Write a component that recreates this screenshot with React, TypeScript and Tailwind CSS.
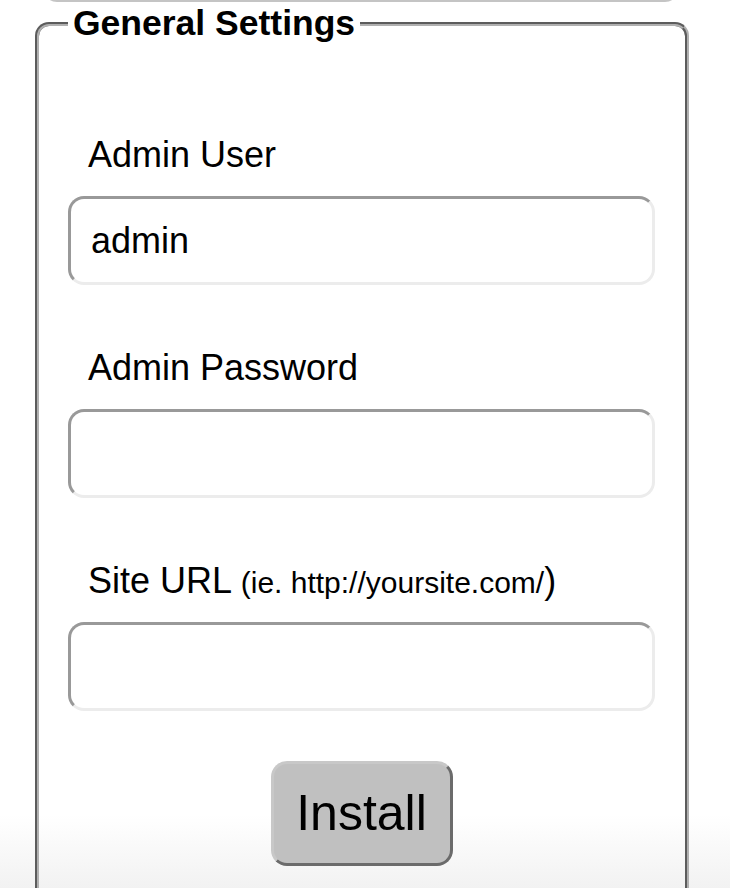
import React from 'react'

const font = { fontFamily: '"Liberation Sans", Arial, Helvetica, sans-serif' }

function Field({ label, value, hint }: { label: string; value?: string; hint?: string }) {
  return (
    <div>
      <label className="block h-[41px] pl-[20px] text-[36px] leading-[41px] text-black">
        {label}
        {hint && (
          <>
            {' '}
            <small className="text-[30px] leading-none">{hint}</small>)
          </>
        )}
      </label>
      <input
        type="text"
        defaultValue={value}
        className="mt-[21px] block h-[89px] w-full rounded-[16px] border-[3px] border-t-[#999] border-l-[#999] border-r-[#ececec] border-b-[#ececec] bg-white px-[20px] text-[36px] text-black outline-none"
      />
    </div>
  )
}

export default function App() {
  return (
    <div
      style={font}
      className="h-[888px] w-[730px] overflow-hidden bg-[linear-gradient(to_bottom,#fff_0,#fff_815px,#f2f2f2_888px)]"
    >
      {/* bottom of the previous panel */}
      <div className="ml-[43px] mt-[-20px] h-[22px] w-[636px] rounded-b-[14px] border-2 border-t-0 border-[#c4c4c4]" />

      <fieldset className="ml-[35px] mt-[1px] min-h-[1000px] w-[654px] rounded-[14px] border-[4px] border-[#b0b0b0] pl-[29px] pr-[30px] [border-style:groove]">
        <legend className="px-[5px] text-[35.5px] font-bold leading-[41px] text-black">General Settings</legend>

        <div className="mt-[90px] flex flex-col gap-[62px]">
          <Field label="Admin User" value="admin" />
          <Field label="Admin Password" />
          <Field label="Site URL" hint="(ie. http://yoursite.com/" />
        </div>

        <div className="mt-[50px] flex justify-center">
          <button className="h-[105px] w-[182px] rounded-[16px] border-[3px] border-t-[#c8c8c8] border-l-[#c8c8c8] border-r-[#6b6b6b] border-b-[#6b6b6b] bg-[#c0c0c0] text-[50px] text-black">
            Install
          </button>
        </div>
      </fieldset>
    </div>
  )
}
